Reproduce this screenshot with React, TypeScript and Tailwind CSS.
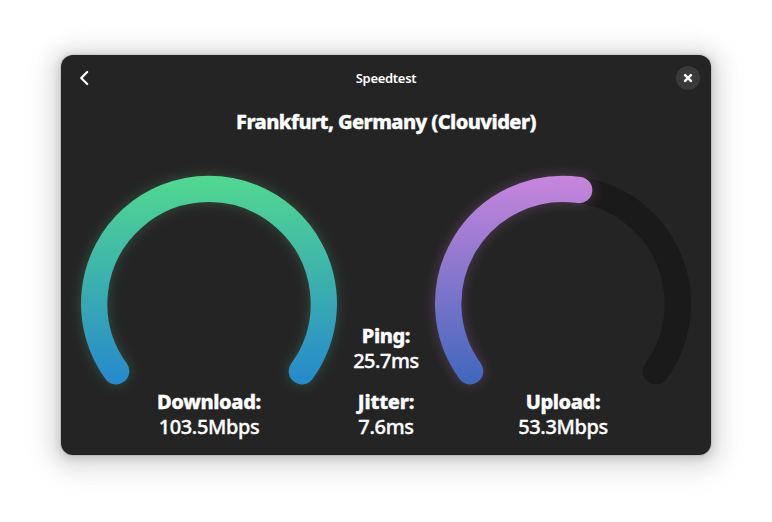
type GaugeProps = {
  id: string;
  label: string;
  value: string;
  arc: string;
  from: string;
  to: string;
  glow: string;
  labelClass: string;
  valueClass: string;
};

const FULL_ARC = "M35.12 195.18A114.8 114.8 0 1 1 220.88 195.18";

function Gauge({ id, label, value, arc, from, to, glow, labelClass, valueClass }: GaugeProps) {
  return (
    <section className="flex w-64 flex-col items-center">
      <svg className="block h-[213px] w-64 overflow-visible" viewBox="0 0 256 213" fill="none" strokeWidth="26.4" strokeLinecap="round">
        <defs>
          <linearGradient id={id} gradientUnits="userSpaceOnUse" x1="0" y1="0" x2="0" y2="208">
            <stop stopColor={from} />
            <stop offset="1" stopColor={to} />
          </linearGradient>
          <filter id={id + "-glow"} filterUnits="userSpaceOnUse" x="-40" y="-40" width="336" height="300" colorInterpolationFilters="sRGB">
            <feGaussianBlur stdDeviation="6.5" />
          </filter>
        </defs>
        <path d={FULL_ARC} stroke="#1a1a1a" />
        <path d={arc} stroke={glow} opacity="0.35" filter={`url(#${id}-glow)`} />
        <path d={arc} stroke={`url(#${id})`} />
      </svg>
      <Reading label={label} value={value} labelClass={labelClass} valueClass={valueClass} />
    </section>
  );
}

function Reading({ label, value, labelClass, valueClass }: { label: string; value: string; labelClass: string; valueClass: string }) {
  return (
    <div className="flex flex-col items-center whitespace-nowrap text-[20px] leading-[25px]">
      <h2 className={"font-extrabold [-webkit-text-stroke:0.35px_white] " + labelClass}>{label}</h2>
      <p className={"font-medium [-webkit-text-stroke:0.35px_white] " + valueClass}>{value}</p>
    </div>
  );
}

export default function App() {
  return (
    <main className="flex h-[522px] w-[772px] items-start overflow-hidden bg-white pl-[61px] pt-[55px] font-['Noto_Sans',sans-serif] text-white">
      <div className="flex h-[400px] w-[650px] flex-col rounded-xl bg-[#242424] shadow-[0_0_0_1px_rgba(0,0,0,0.08),0_2px_8px_2px_rgba(0,0,0,0.13),0_3px_20px_10px_rgba(0,0,0,0.09),0_6px_32px_16px_rgba(0,0,0,0.04)]">
        <header className="flex h-[46px] items-center justify-between px-[11px]">
          <button aria-label="Back" className="flex size-6 items-center justify-center">
            <svg className="size-4" viewBox="0 0 16 16" fill="none" stroke="white" strokeWidth="2.2" strokeLinecap="round" strokeLinejoin="round">
              <path d="M11.2 2L5.2 8L11.2 14" />
            </svg>
          </button>
          <h1 className="pt-px text-[13px] font-semibold tracking-[-0.3px]">Speedtest</h1>
          <button aria-label="Close" className="flex size-6 items-center justify-center rounded-full bg-[#3a3a3a]">
            <svg className="size-4" viewBox="0 0 16 16" fill="none" stroke="white" strokeWidth="2.5" strokeLinecap="round">
              <path d="M5.1 5.1L10.9 10.9M10.9 5.1L5.1 10.9" />
            </svg>
          </button>
        </header>
        <h2 className="mt-[7px] text-center text-[20px] font-extrabold leading-7 tracking-[-0.57px] [-webkit-text-stroke:0.35px_white]">Frankfurt, Germany (Clouvider)</h2>
        <div className="mt-10 flex px-5">
          <Gauge id="download" label="Download:" value="103.5Mbps" arc={FULL_ARC} from="#52d88f" to="#2689cd" glow="#57a072" labelClass="tracking-[-0.35px]" valueClass="tracking-[-0.4px]" />
          <div className="flex w-[98px] flex-col items-center justify-end gap-4">
            <Reading label="Ping:" value="25.7ms" labelClass="tracking-[-0.4px]" valueClass="tracking-[-0.45px]" />
            <Reading label="Jitter:" value="7.6ms" labelClass="tracking-[-0.2px]" valueClass="tracking-[-0.3px]" />
          </div>
          <Gauge id="upload" label="Upload:" value="53.3Mbps" arc="M35.12 195.18A114.8 114.8 0 0 1 144.1 14.03" from="#c885dc" to="#3f67bd" glow="#a56fa8" labelClass="tracking-[-0.4px]" valueClass="tracking-[-0.4px]" />
        </div>
      </div>
    </main>
  );
}
